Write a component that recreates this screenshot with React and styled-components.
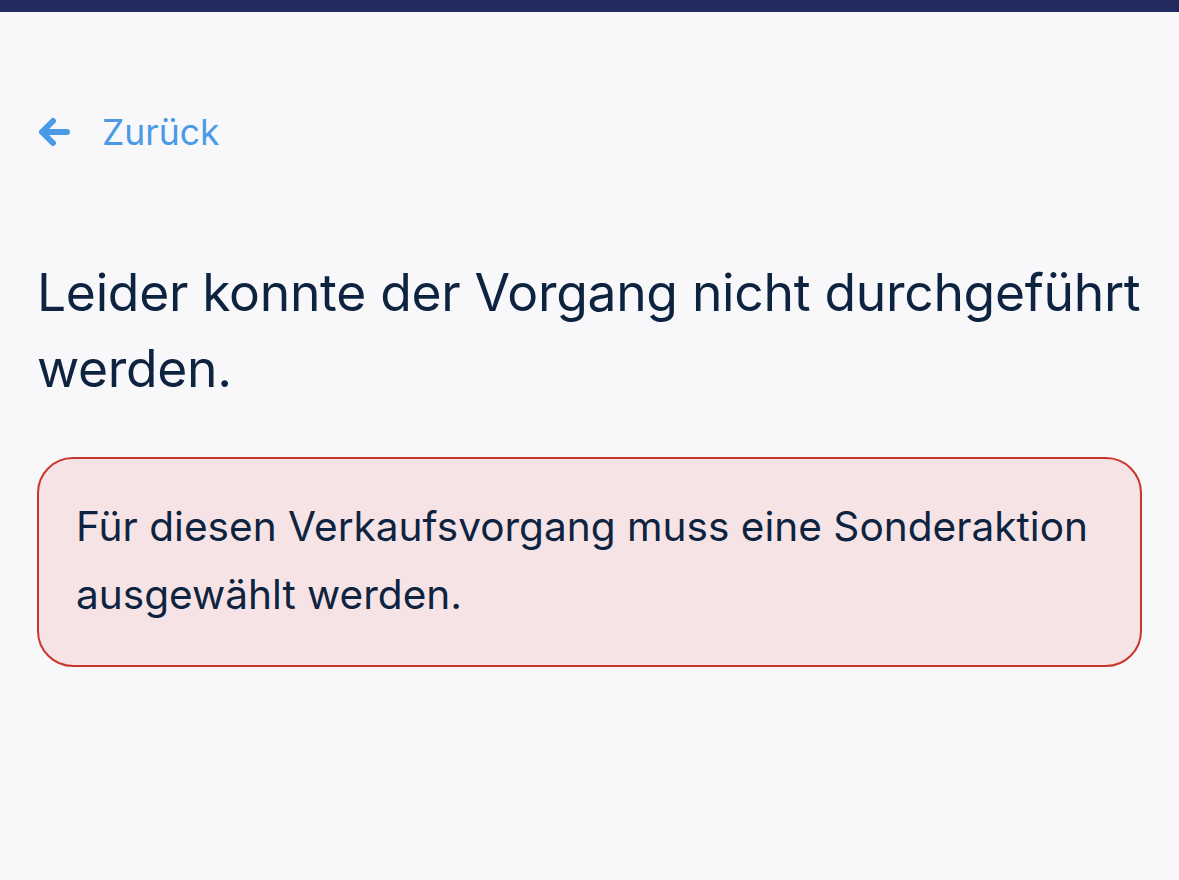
import React from "react"
import styled, { createGlobalStyle } from "styled-components"

const GlobalStyle = createGlobalStyle`
  html, body {
    margin: 0;
    padding: 0;
    background: #f8f8fb;
  }
  body {
    font-family: Inter, "Noto Sans", sans-serif;
    -webkit-font-smoothing: antialiased;
  }
`

const Page = styled.div`
  min-height: 880px;
  background: #f8f8fb;
`

const TopBar = styled.div`
  height: 12px;
  background: #232a5f;
`

const Content = styled.main`
  padding: 0 37px;
`

const BackLink = styled.a`
  display: flex;
  align-items: center;
  gap: 31px;
  margin-top: 100px;
  height: 40px;
  color: #4a9ae6;
  font-size: 35.5px;
  text-decoration: none;
  cursor: pointer;
`

const Heading = styled.h1`
  margin: 102px -37px 0 0;
  font-size: 51.6px;
  font-weight: 400;
  line-height: 76px;
  letter-spacing: -0.3px;
  color: #0e2340;
`

const ErrorBox = styled.div`
  margin-top: 51px;
  border: 2.5px solid #c9372c;
  border-radius: 36px;
  background: #f6e3e5;
  padding: 34px 30px 36px 37px;
  color: #0e2340;
  font-size: 40.6px;
  line-height: 68px;
`

const ArrowLeft = () => (
  <svg width="34" height="30" viewBox="0 0 34 30" fill="none">
    <path
      d="M30 15H5M16 4L5 15l11 11"
      stroke="#4a9ae6"
      strokeWidth="6"
      strokeLinecap="round"
      strokeLinejoin="round"
    />
  </svg>
)

export default function App() {
  return (
    <Page>
      <GlobalStyle />
      <TopBar />
      <Content>
        <BackLink>
          <ArrowLeft />
          Zurück
        </BackLink>
        <Heading>Leider konnte der Vorgang nicht durchgeführt werden.</Heading>
        <ErrorBox>
          Für diesen Verkaufsvorgang muss eine Sonderaktion ausgewählt werden.
        </ErrorBox>
      </Content>
    </Page>
  )
}
